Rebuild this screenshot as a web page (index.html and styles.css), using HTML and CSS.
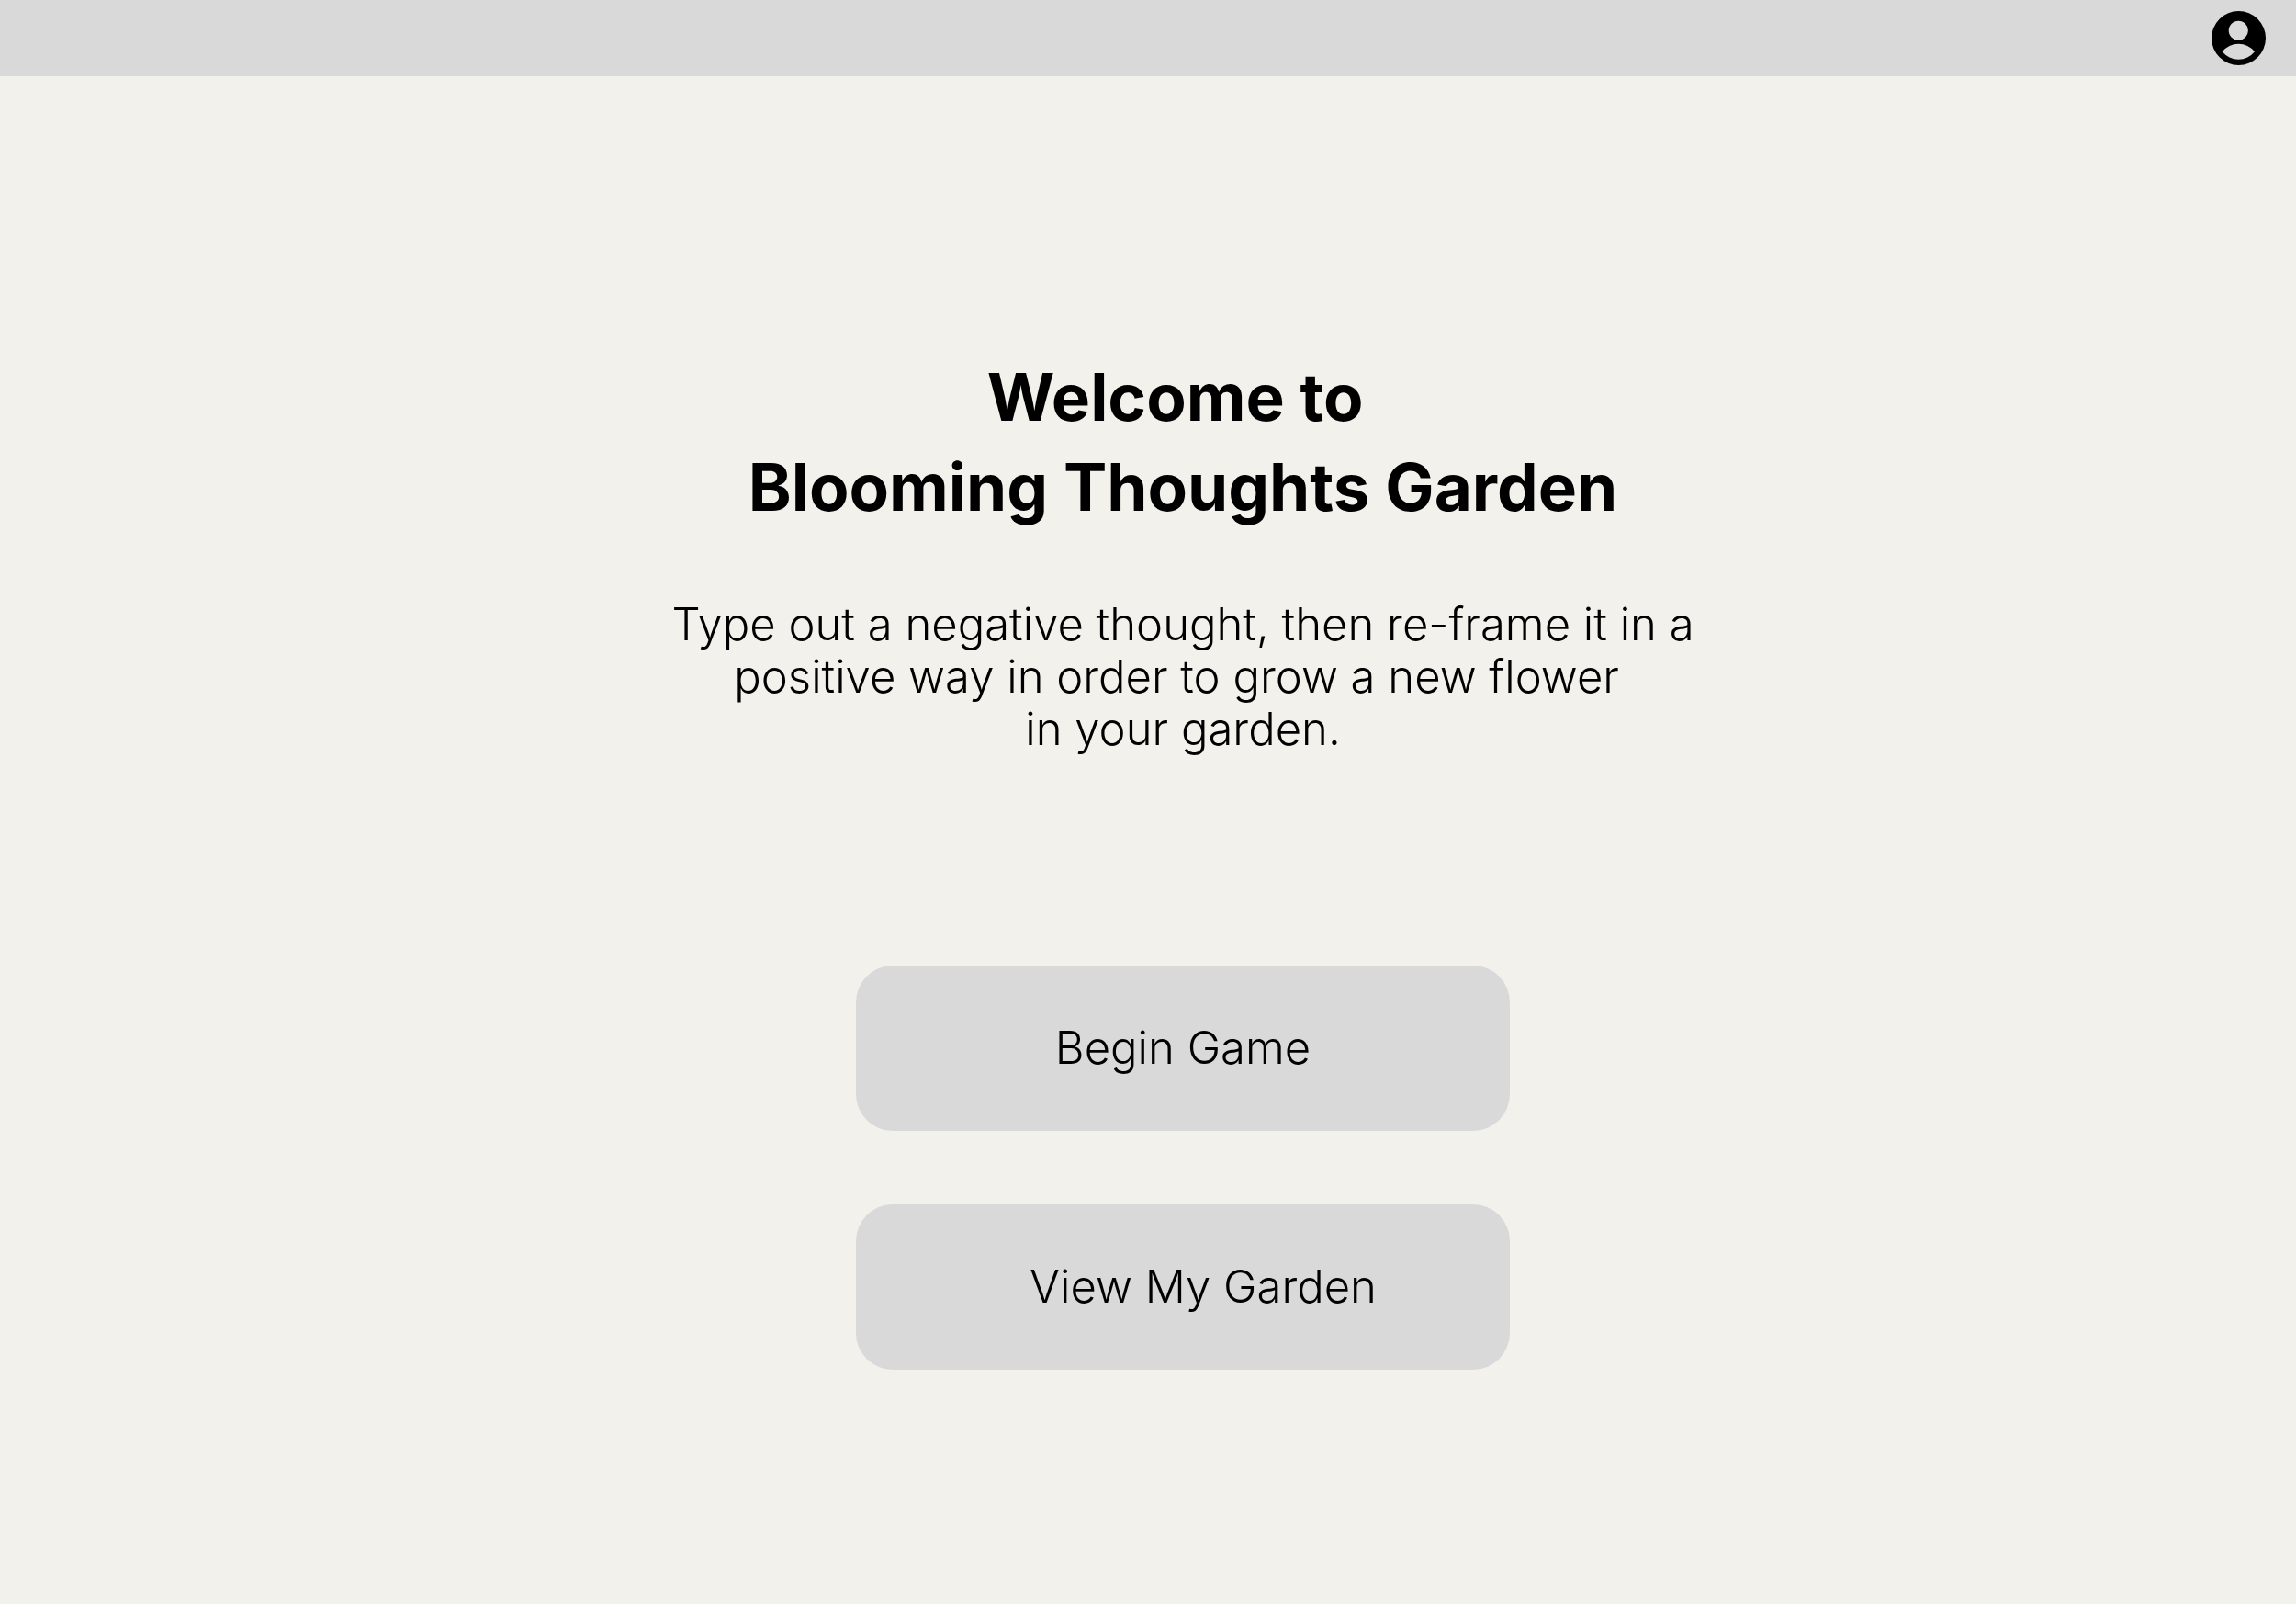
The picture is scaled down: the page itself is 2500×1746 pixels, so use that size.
FILE: index.html
```
<!DOCTYPE html>
<html lang="en">
<head>
  <meta charset="utf-8">
  <meta name="viewport" content="width=device-width, initial-scale=1">
  <title>Blooming Thoughts Garden</title>
  <link rel="stylesheet" href="styles.css">
</head>
<body>
  <header class="topbar">
    <button class="account" type="button" aria-label="Account">
      <svg class="account-icon" viewBox="0 0 59 59" aria-hidden="true">
        <path fill-rule="evenodd" d="M29.5 0a29.5 29.5 0 1 1 0 59a29.5 29.5 0 1 1 0-59zM29.3 10.7a10.6 10.6 0 1 0 0 21.2a10.6 10.6 0 1 0 0-21.2zM11.7 44.3A22.4 22.4 0 0 1 47 44.3A22.8 22.8 0 0 1 11.7 44.3z"/>
      </svg>
    </button>
  </header>
  <main class="welcome">
    <h1 class="title">Welcome to&nbsp;<br>Blooming Thoughts Garden</h1>
    <p class="intro">Type out a negative thought, then re-frame it in a<br>positive way in order to grow a new flower&nbsp;<br>in your garden.</p>
    <nav class="actions" aria-label="Game">
      <button class="action" type="button">Begin Game</button>
      <button class="action action-garden" type="button">View My Garden</button>
    </nav>
  </main>
</body>
</html>
```
FILE: styles.css
```
* {
  box-sizing: border-box;
}

body {
  margin: 0;
  min-height: 100vh;
  background: #f2f1eb;
  color: #000;
  font-family: Inter, "Open Sans", sans-serif;
}

.topbar {
  display: flex;
  justify-content: flex-end;
  padding: 12px 33px;
  background: #d9d9d9;
}

.account {
  display: flex;
  padding: 0;
  border: 0;
  border-radius: 50%;
  background: none;
  color: inherit;
  cursor: pointer;
}

.account-icon {
  width: 59px;
  height: 59px;
  fill: currentColor;
}

.welcome {
  display: flex;
  flex-direction: column;
  align-items: center;
  padding: 300px 0 80px 76px;
  text-align: center;
}

.title {
  margin: 0 0 72px;
  font-size: 71px;
  line-height: 98px;
  font-weight: 700;
}

.intro {
  margin: 0 0 229px;
  font-size: 49px;
  line-height: 57px;
  font-weight: 300;
}

.actions {
  display: flex;
  flex-direction: column;
  gap: 80px;
  width: 100%;
  max-width: 712px;
}

.action {
  min-height: 180px;
  padding: 0;
  border: 0;
  border-radius: 40px;
  background: #d9d9d9;
  color: inherit;
  font: 300 49px/60px Inter, "Open Sans", sans-serif;
  cursor: pointer;
}

.action-garden {
  padding-left: 44px;
}
```
